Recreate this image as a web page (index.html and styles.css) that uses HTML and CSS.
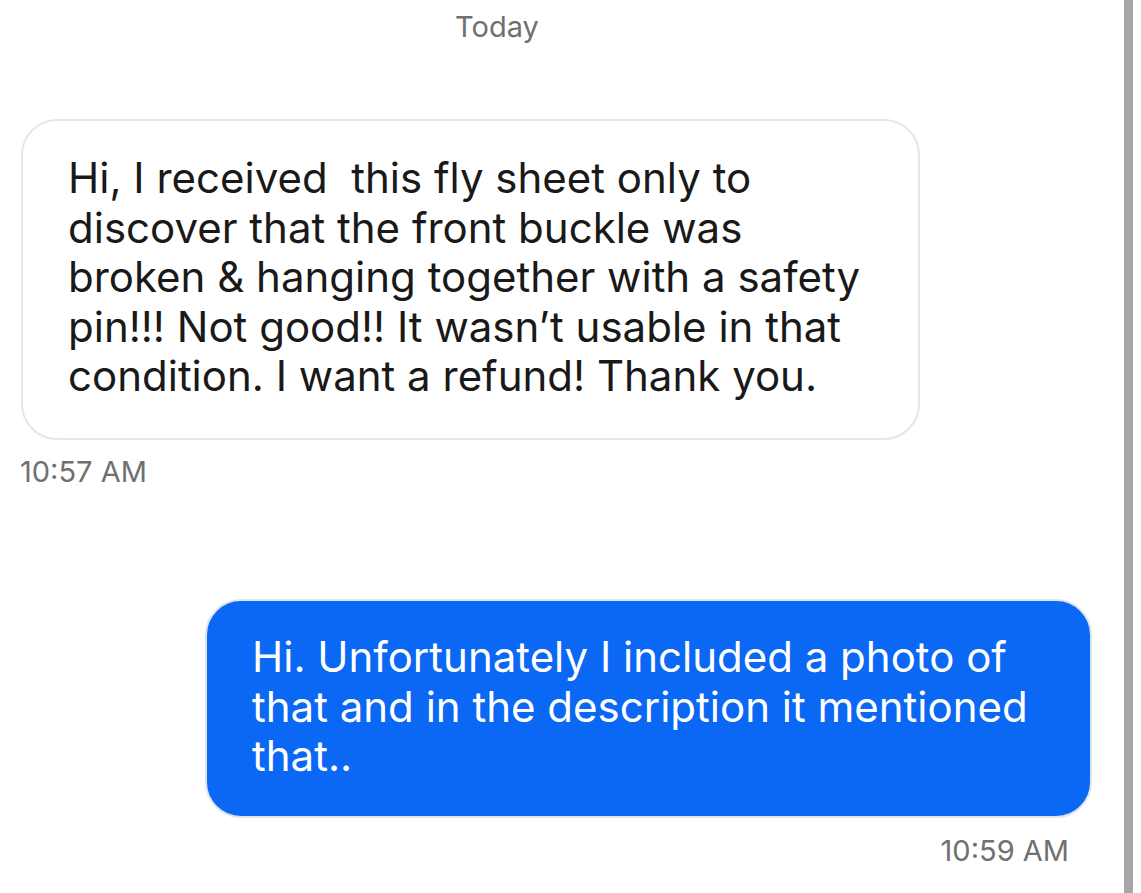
FILE: index.html
```html
<!DOCTYPE html>
<html lang="en">
<head>
    <meta charset="UTF-8">
    <meta name="viewport" content="width=device-width, initial-scale=1.0">
    <title>Messages</title>
    <link rel="stylesheet" href="styles.css">
</head>
<body>
    <div class="page">
        <div class="thread">
            <p class="day">Today</p>

            <!-- incoming -->
            <div class="msg msg-in">
                <div class="bubble bubble-in">
                    Hi, I received&nbsp; this fly sheet only to<br>
                    discover that the front buckle was<br>
                    broken &amp; hanging together with a safety<br>
                    pin!!! Not good!! It wasn’t usable in that<br>
                    condition. I want a refund! Thank you.
                </div>
                <p class="time">10:57 AM</p>
            </div>

            <!-- outgoing -->
            <div class="msg msg-out">
                <div class="bubble bubble-out">
                    Hi. Unfortunately I included a photo of<br>
                    that and in the description it mentioned<br>
                    that..
                </div>
                <p class="time">10:59 AM</p>
            </div>
        </div>
        <div class="scrollbar"></div>
    </div>
</body>
</html>
```

FILE: styles.css
```css
body {
    margin: 0;
    background: #fff;
    font-family: Inter, Roboto, "Liberation Sans", sans-serif;
}
.page {
    display: flex;
    height: 893px;
    overflow: hidden;
}
.thread {
    flex: 1;
}
.scrollbar {
    width: 9px;
    margin-right: 8px;
    background: #a6a6a6;
}
.day {
    margin: 0;
    padding-top: 10px;
    padding-right: 130px;
    text-align: center;
    font-size: 29px;
    line-height: 34px;
    color: #707070;
}
.msg {
    display: flex;
    flex-direction: column;
}
.msg-in {
    align-items: flex-start;
    margin-top: 75px;
    padding-left: 21px;
}
.msg-out {
    align-items: flex-end;
    margin-top: 110px;
    padding-right: 32px;
}
.bubble {
    box-sizing: border-box;
    border-radius: 36px;
    font-size: 42px;
    line-height: 49.5px;
    padding-left: 45px;
    white-space: nowrap;
}
.bubble-in {
    width: 899px;
    padding-top: 32px;
    padding-bottom: 37.5px;
    border: 2px solid #e6e6e6;
    color: #191919;
}
.bubble-out {
    width: 887px;
    padding-top: 31px;
    padding-bottom: 35.5px;
    border: 2px solid #dde5ee;
    background: #0a68f5;
    color: #fff;
}
.time {
    margin: 14px 0 0;
    font-size: 29px;
    line-height: 35px;
    color: #707070;
}
.msg-in .time {
    margin-left: -1px;
}
.msg-out .time {
    margin-top: 15px;
    margin-right: 23px;
}
```
